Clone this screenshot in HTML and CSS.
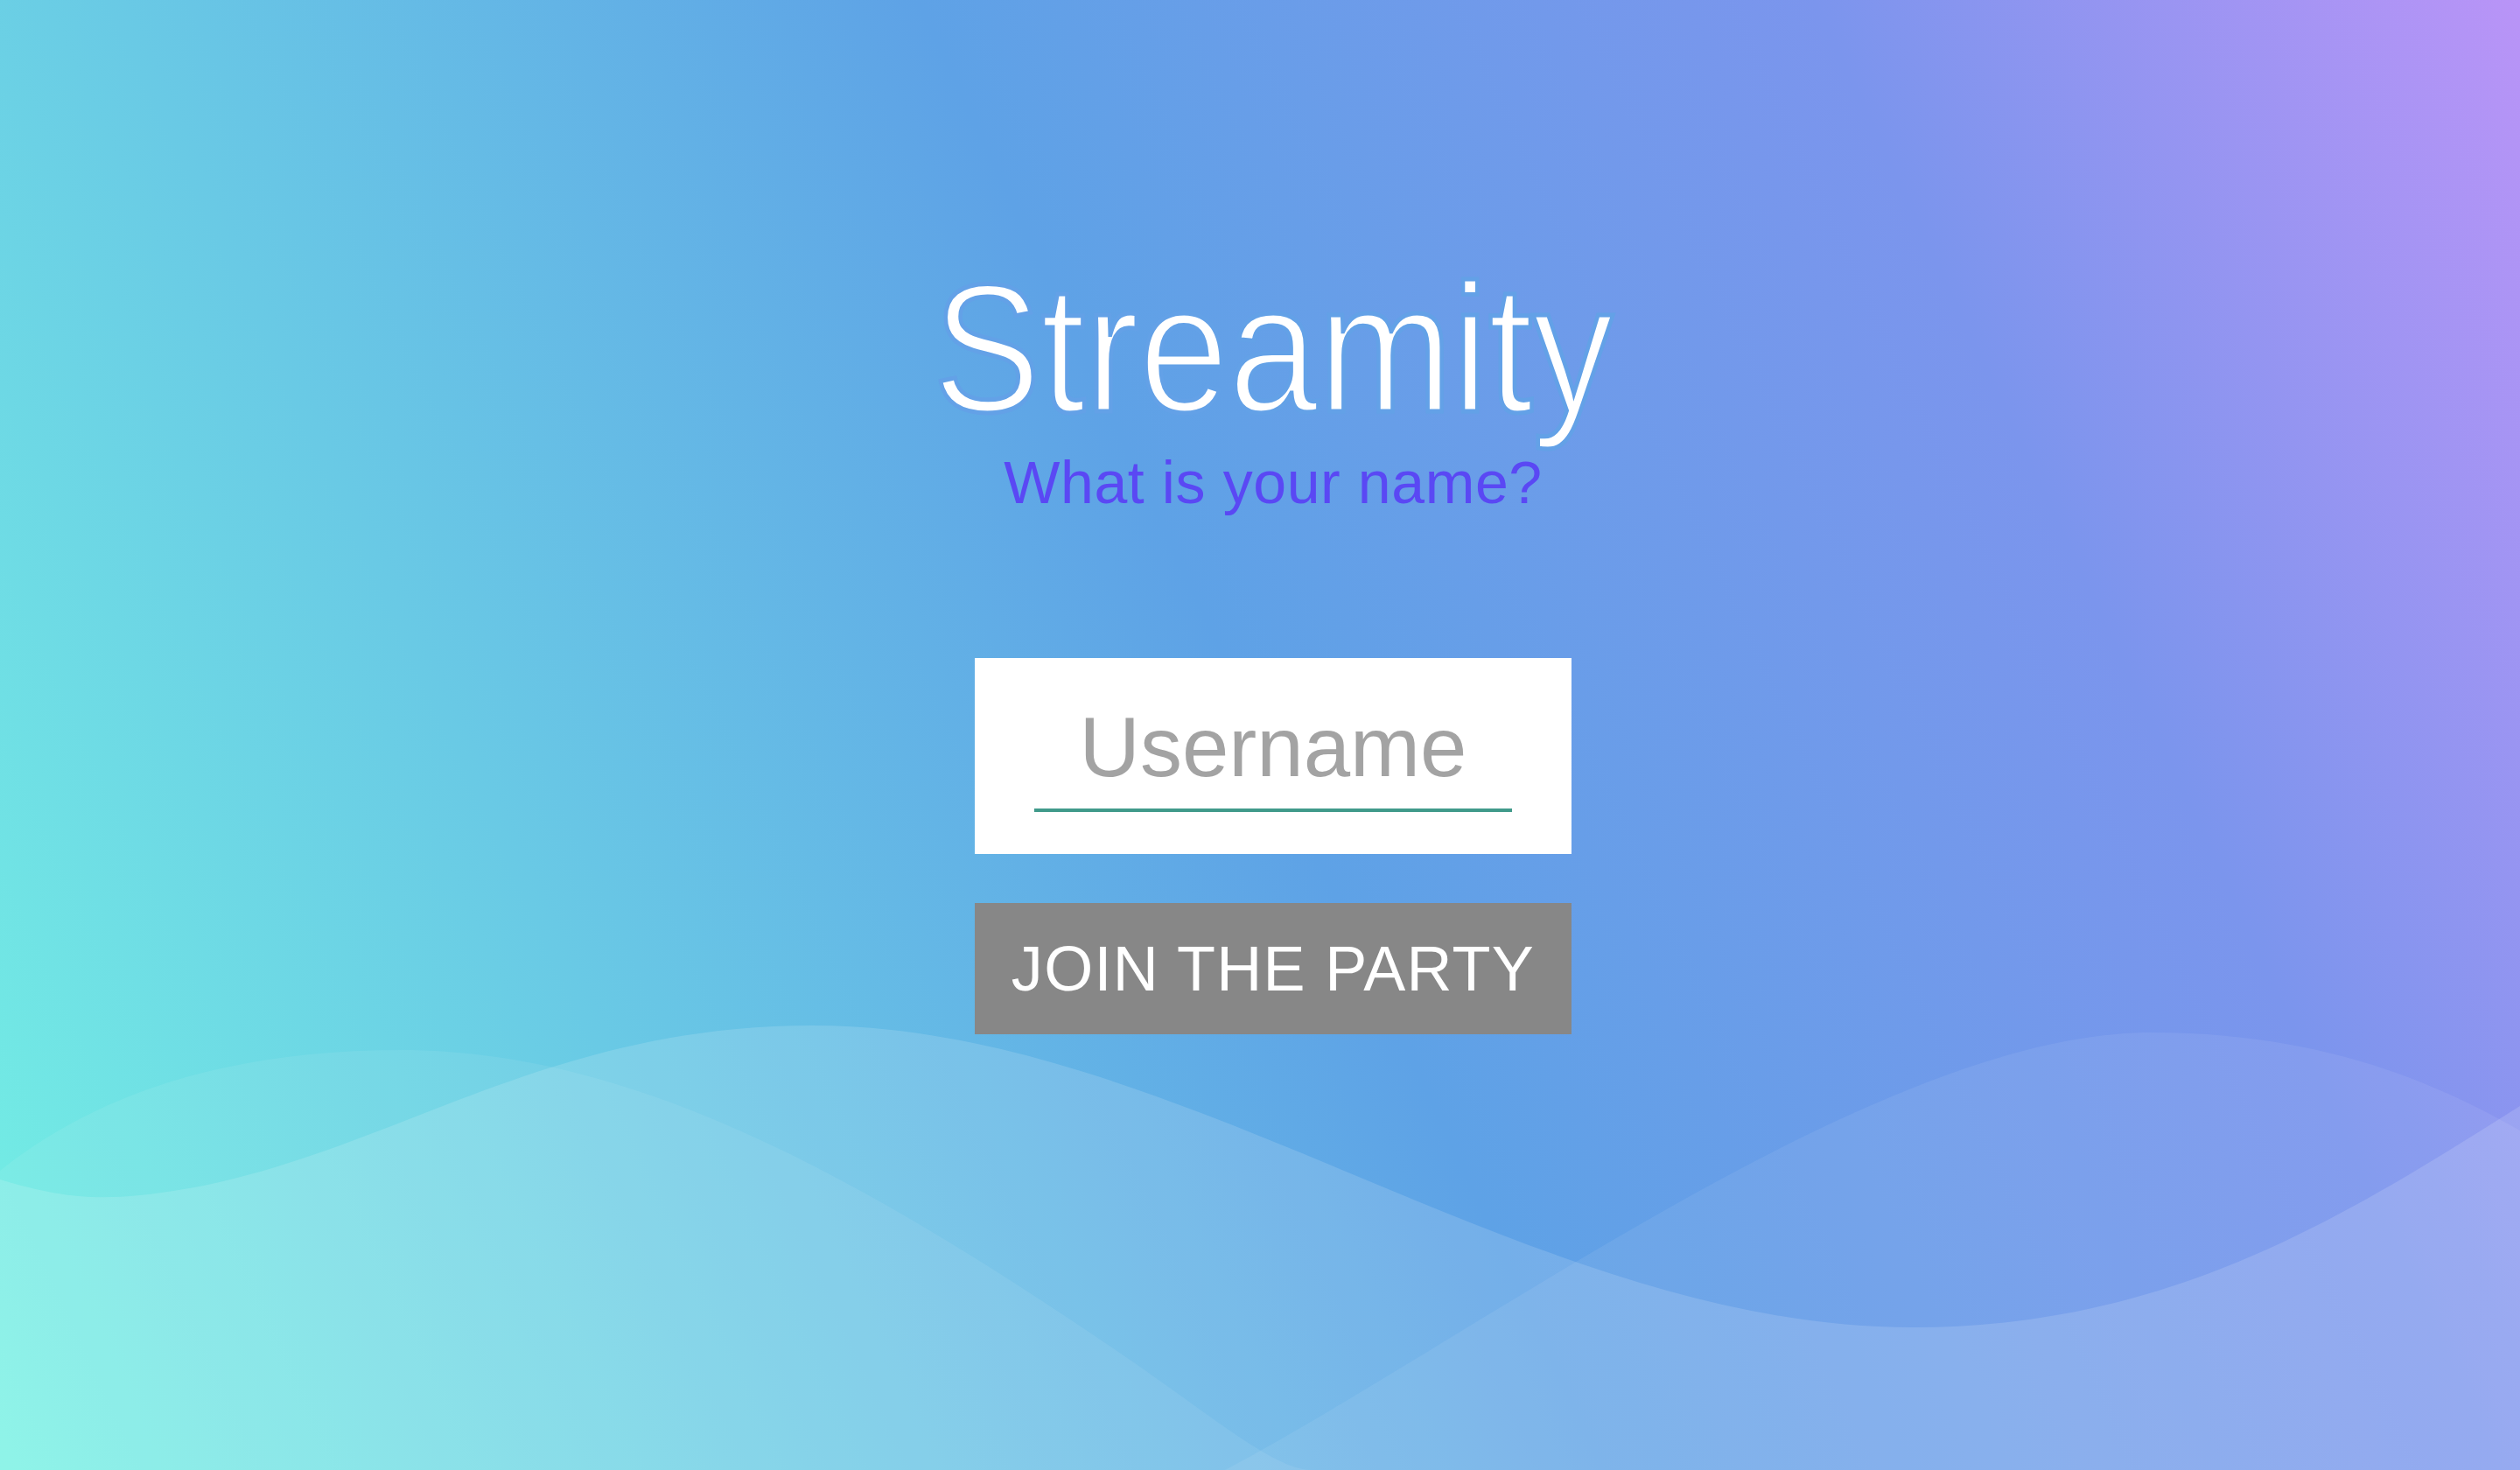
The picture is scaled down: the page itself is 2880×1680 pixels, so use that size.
FILE: index.html
```html
<!DOCTYPE html>
<html lang="en">
<head>
<meta charset="utf-8">
<title>Streamity</title>
<link rel="stylesheet" href="styles.css">
</head>
<body>
<div class="page">
  <svg class="waves" viewBox="0 0 2880 1680" preserveAspectRatio="none" aria-hidden="true">
    <path class="wave-back" d="M0,1338 C110,1250 260,1200 459,1200 C720,1200 980,1340 1300,1560 C1400,1630 1460,1680 1500,1680 L0,1680 Z"/>
    <path class="wave-back" d="M1400,1680 C1700,1520 2150,1180 2459,1180 C2650,1180 2780,1235 2880,1292 L2880,1680 Z"/>
    <path class="wave-front" d="M0,1348 C60,1366 100,1372 160,1366 C420,1340 600,1172 928,1172 C1350,1172 1750,1517 2186,1517 C2480,1517 2680,1390 2880,1264 L2880,1680 L0,1680 Z"/>
  </svg>
  <main class="content">
    <h1 class="title">Streamity</h1>
    <p class="subtitle">What is your name?</p>
    <form class="join-form" onsubmit="return false">
      <div class="field">
        <input class="name-input" type="text" placeholder="Username">
      </div>
      <button class="join-btn" type="submit">JOIN THE PARTY</button>
    </form>
  </main>
</div>
</body>
</html>
```

FILE: styles.css
```css
html, body {
  margin: 0;
  padding: 0;
  height: 100%;
}

body {
  font-family: "Liberation Sans", Arial, Helvetica, sans-serif;
  overflow: hidden;
}

.page {
  position: relative;
  min-height: 100vh;
  background: linear-gradient(65deg, #74f1e4 0%, #5ea2e6 50%, #7b95ed 78%, #b994f7 100%);
  overflow: hidden;
}

.waves {
  position: absolute;
  inset: 0;
  width: 100%;
  height: 100%;
  z-index: 0;
}

.wave-back {
  fill: #ffffff;
  fill-opacity: 0.07;
}

.wave-front {
  fill: #ffffff;
  fill-opacity: 0.14;
}

.content {
  position: relative;
  z-index: 1;
  display: flex;
  flex-direction: column;
  align-items: center;
  padding: 294px 0 0 30px;
}

/* light-weight look: the stroke, tinted like the backdrop, thins the glyphs */
.title {
  margin: 0;
  font-size: 208px;
  line-height: 1;
  font-weight: 400;
  color: #ffffff;
  -webkit-text-stroke: 5px #63a1e7;
  transform: scaleX(0.885);
}

.subtitle {
  margin: 15px 0 0;
  font-size: 68px;
  line-height: 1;
  letter-spacing: 0.6px;
  color: #5a48f4;
}

.join-form {
  display: flex;
  flex-direction: column;
  gap: 56px;
  margin-top: 167px;
}

.field {
  width: 546px;
  padding: 54px 68px 48px;
  background: #ffffff;
}

.name-input {
  display: block;
  box-sizing: content-box;
  width: 100%;
  height: 96px;
  padding: 0 0 22px;
  margin: 0;
  border: 0;
  border-bottom: 4px solid #419a8b;
  background: transparent;
  font-family: "Liberation Sans", Arial, Helvetica, sans-serif;
  font-size: 96px;
  line-height: 96px;
  color: #555555;
  text-align: center;
  outline: none;
}

.name-input::placeholder {
  color: #a3a3a3;
  opacity: 1;
}

.join-btn {
  width: 682px;
  height: 150px;
  padding: 0;
  border: 0;
  background: #878787;
  color: #ffffff;
  font-family: "Liberation Sans", Arial, Helvetica, sans-serif;
  font-size: 72px;
  line-height: 1;
  letter-spacing: 1.3px;
  cursor: pointer;
}
```
